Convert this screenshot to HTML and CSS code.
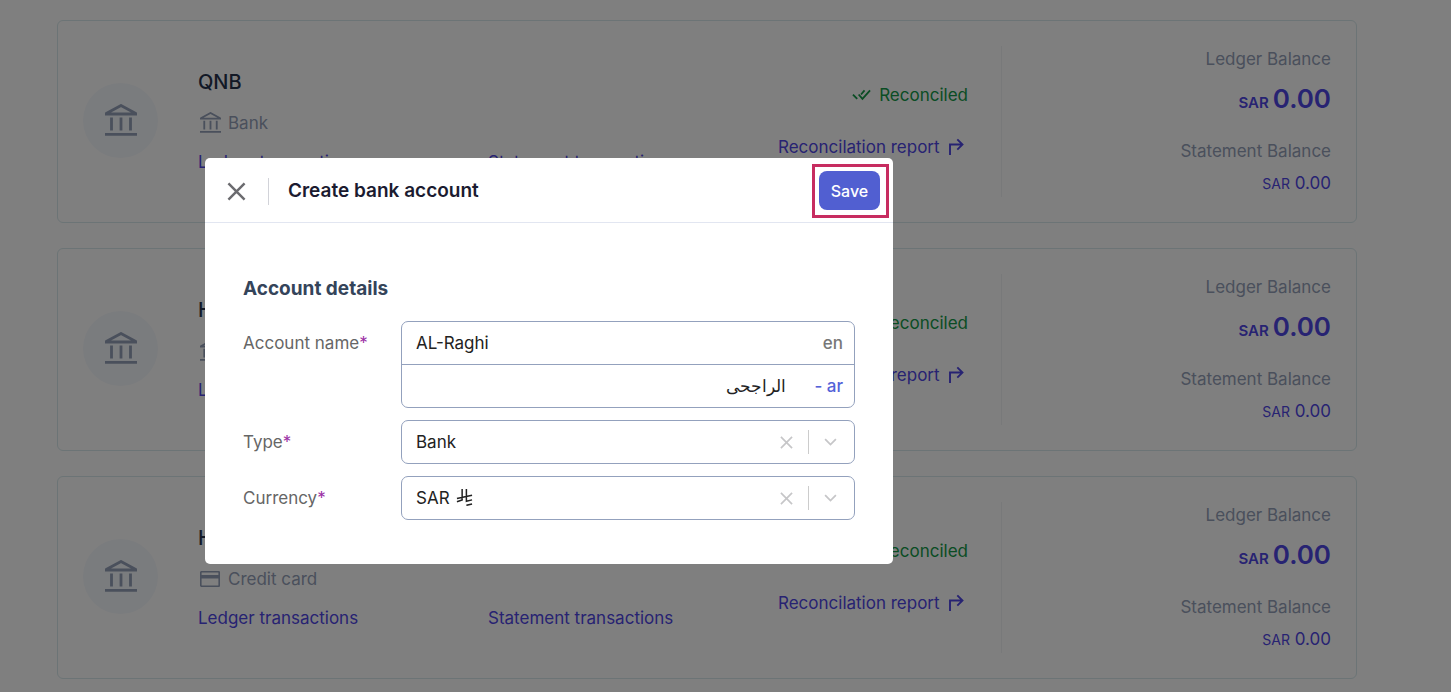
FILE: index.html
```
<!DOCTYPE html>
<html lang="en">
<head>
<meta charset="utf-8">
<title>Bank accounts</title>
<link rel="stylesheet" href="styles.css">
</head>
<body>
<svg class="sprite" aria-hidden="true">
  <symbol id="bank" viewBox="0 0 32 32"><path fill="none" stroke="currentColor" stroke-width="2.800" d="M0 30.400H32M0 10H32M6.500 13.500V26.500M16 13.500V26.500M25.500 13.500V26.500M1.200 9.500 16 1.500 30.800 9.500"/></symbol>
  <symbol id="credit" viewBox="0 0 20 16"><path fill="none" stroke="currentColor" stroke-width="1.700" d="M1.750.75h16.500a1 1 0 0 1 1 1v12.500a1 1 0 0 1-1 1H1.750a1 1 0 0 1-1-1V1.750a1 1 0 0 1 1-1Z"/><path fill="currentColor" d="M0 4h20v3.500H0z"/></symbol>
  <symbol id="checks" viewBox="0 0 20 12"><path fill="none" stroke="currentColor" stroke-width="1.900" d="M1 5.500 5.500 10.200M7 5.500 11 10 19 1.200M9.500 5.500 13.200 1.200"/></symbol>
  <symbol id="turn" viewBox="0 0 16 18"><path fill="none" stroke="currentColor" stroke-width="1.900" d="M2 17V6.500H14.500M9.300 1.300 14.500 6.500 9.300 11.700"/></symbol>
  <symbol id="cross" viewBox="0 0 20 20"><path fill="none" stroke="currentColor" stroke-width="2.600" d="M1.500 1.500 18.500 18.500M18.500 1.500 1.500 18.500"/></symbol>
  <symbol id="cross-thin" viewBox="0 0 14 14"><path fill="none" stroke="currentColor" stroke-width="1.800" d="M1 1 13 13M13 1 1 13"/></symbol>
  <symbol id="chevron" viewBox="0 0 14 8"><path fill="none" stroke="currentColor" stroke-width="1.900" d="M1.200 1 7 6.800 12.800 1"/></symbol>
  <symbol id="riyal" viewBox="0 0 18 18"><path fill="none" stroke="currentColor" stroke-width="1.600" d="M6.500 0V11.500L1 13.500M11 0V13L17 11.500M1 10 17 6.600M11 17.300 17 16"/></symbol>
</svg>

<main class="accounts">
  <article class="card">
    <div class="avatar"><svg><use href="#bank"/></svg></div>
    <div class="info">
      <h2>QNB</h2>
      <p class="kind"><svg><use href="#bank"/></svg>Bank</p>
      <a href="#">Ledger transactions</a>
    </div>
    <div class="statement"><a href="#">Statement transactions</a></div>
    <div class="status">
      <p class="reconciled"><svg><use href="#checks"/></svg>Reconciled</p>
      <a class="report" href="#">Reconcilation report<svg><use href="#turn"/></svg></a>
    </div>
    <div class="balance">
      <p>Ledger Balance</p>
      <p class="ledger"><span>SAR</span> 0.00</p>
      <p>Statement Balance</p>
      <p class="stated"><span>SAR</span> 0.00</p>
    </div>
  </article>
  <article class="card">
    <div class="avatar"><svg><use href="#bank"/></svg></div>
    <div class="info">
      <h2>H</h2>
      <p class="kind"><svg><use href="#bank"/></svg>Bank</p>
      <a href="#">Ledger transactions</a>
    </div>
    <div class="statement"><a href="#">Statement transactions</a></div>
    <div class="status">
      <p class="reconciled"><svg><use href="#checks"/></svg>Reconciled</p>
      <a class="report" href="#">Reconcilation report<svg><use href="#turn"/></svg></a>
    </div>
    <div class="balance">
      <p>Ledger Balance</p>
      <p class="ledger"><span>SAR</span> 0.00</p>
      <p>Statement Balance</p>
      <p class="stated"><span>SAR</span> 0.00</p>
    </div>
  </article>
  <article class="card">
    <div class="avatar"><svg><use href="#bank"/></svg></div>
    <div class="info">
      <h2>H</h2>
      <p class="kind"><svg class="credit"><use href="#credit"/></svg>Credit card</p>
      <a href="#">Ledger transactions</a>
    </div>
    <div class="statement"><a href="#">Statement transactions</a></div>
    <div class="status">
      <p class="reconciled"><svg><use href="#checks"/></svg>Reconciled</p>
      <a class="report" href="#">Reconcilation report<svg><use href="#turn"/></svg></a>
    </div>
    <div class="balance">
      <p>Ledger Balance</p>
      <p class="ledger"><span>SAR</span> 0.00</p>
      <p>Statement Balance</p>
      <p class="stated"><span>SAR</span> 0.00</p>
    </div>
  </article>
</main>

<div class="backdrop"></div>
<form class="modal" role="dialog" aria-labelledby="modal-title">
  <header class="modal-head">
    <button class="close" type="button" aria-label="Close"><svg><use href="#cross"/></svg></button>
    <h1 id="modal-title">Create bank account</h1>
    <div class="highlight"><button class="save" type="button">Save</button></div>
  </header>
  <div class="modal-body">
    <h2>Account details</h2>
    <div class="row">
      <label for="name-en">Account name<b>*</b></label>
      <div class="names">
        <div class="name"><input id="name-en" type="text" value="AL-Raghi"><span>en</span></div>
        <div class="name arabic"><input type="text" dir="rtl" lang="ar" aria-label="Account name in Arabic" value="الراجحى"><span>- ar</span></div>
      </div>
    </div>
    <div class="row">
      <label for="type">Type<b>*</b></label>
      <div class="picker">
        <select id="type"><option>Bank</option></select>
        <div class="tools"><button type="button" aria-label="Clear type"><svg><use href="#cross-thin"/></svg></button><svg class="chevron"><use href="#chevron"/></svg></div>
      </div>
    </div>
    <div class="row">
      <label for="currency">Currency<b>*</b></label>
      <div class="picker">
        <select id="currency"><option>SAR</option></select>
        <svg class="riyal"><use href="#riyal"/></svg>
        <div class="tools"><button type="button" aria-label="Clear currency"><svg><use href="#cross-thin"/></svg></button><svg class="chevron"><use href="#chevron"/></svg></div>
      </div>
    </div>
  </div>
</form>
</body>
</html>
```
FILE: styles.css
```
* { box-sizing: border-box; }
body {
  margin: 0;
  background: #fff;
  font: 400 17px/26px Inter, "Noto Sans", sans-serif;
  color: #222;
  overflow: hidden;
}
h1, h2, p { margin: 0; }
svg { display: block; flex: none; overflow: visible; }
.sprite { position: absolute; width: 0; height: 0; }
button { padding: 0; border: 0; background: none; font: inherit; }
a { color: #4f46e5; text-decoration: none; }

.accounts {
  display: flex;
  flex-direction: column;
  gap: 25px;
  padding: 20px 94px 12px 57px;
}
.card {
  display: grid;
  grid-template-columns: 115px 1fr 1fr 190px 363px;
  align-items: center;
  padding: 25px;
  border: 1px solid #d8e8ec;
  border-radius: 6px;
}
.avatar {
  display: grid;
  place-items: center;
  width: 75px;
  height: 75px;
  margin-bottom: 2px;
  border-radius: 50%;
  background: #f5f8fc;
  color: #94a0b8;
}
.avatar svg { width: 32px; height: 32px; margin-bottom: 2px; }
.info, .statement { line-height: 40px; white-space: nowrap; }
.info h2 { font-size: 20px; font-weight: 500; line-height: 41px; color: #27324c; }
.info a, .statement a { display: block; }
.info a { line-height: 39px; }
.statement { align-self: end; padding-bottom: 15px; }
.kind { display: flex; align-items: center; gap: 7px; padding-left: 2px; color: #94a0b8; }
.kind svg { width: 21px; height: 21px; }
.kind .credit { width: 20px; height: 16px; margin-right: 1px; }
.status { padding-bottom: 2px; line-height: 52px; white-space: nowrap; }
.reconciled { display: flex; align-items: center; justify-content: flex-end; gap: 8px; color: #149a48; }
.reconciled svg { width: 19px; height: 12px; }
.report { display: flex; align-items: center; gap: 8px; }
.report svg { width: 16px; height: 18px; }
.balance { margin-left: 33px; border-left: 1px solid #f1f2f4; height: 151px; text-align: right; color: #94a0b8; }
.balance .ledger { display: flex; justify-content: flex-end; align-items: baseline; gap: 4px; margin-bottom: 12px; font-size: 26px; font-weight: 600; line-height: 54px; color: #4f46e5; }
.ledger span { font-size: 15px; line-height: 1; }
.balance .stated { margin-top: 6px; color: #4f46e5; }
.stated span { font-size: 14px; line-height: 1; }

.backdrop { position: fixed; inset: 0; background: rgba(0, 0, 0, .5); }
.modal {
  position: fixed;
  top: 158px;
  left: 205px;
  width: 688px;
  border-radius: 5px;
  background: #fff;
}
.modal-head {
  display: flex;
  align-items: center;
  height: 65px;
  padding: 2px 4px 0 22px;
  border-bottom: 1px solid #e2e6f1;
}
.close { padding-right: 22px; border-right: 1px solid #d2d3d9; line-height: 0; height: 27px; color: #6b6b6f; }
.close svg { width: 19px; height: 19px; }
.modal h1 { flex: 1; padding-left: 19px; font-size: 19px; font-weight: 600; color: #1b1b30; }
.highlight { padding: 4px 6px 5px 4px; border: 3px solid #c72c60; }
.save { display: block; width: 61px; height: 39px; border-radius: 8px; background: #515fd1; color: #fff; font-size: 16px; font-weight: 500; }
.modal-body { display: grid; gap: 12px; padding: 53px 38px 44px; }
.modal-body h2 { margin-bottom: 7px; font-size: 19px; font-weight: 700; color: #34445a; }
.row { display: grid; grid-template-columns: 158px 1fr; }
.row label { line-height: 44px; color: #666; }
.row b { font-weight: 400; color: #9b30a5; }
.names { border: 1px solid #93a1bd; border-radius: 7px; }
.name { display: flex; align-items: center; height: 42px; padding: 0 11px 0 14px; }
.name + .name { height: 43px; border-top: 1px solid #93a1bd; }
.name input { flex: 1; min-width: 0; padding: 0; border: 0; background: none; font: inherit; color: #222; outline: 0; }
.name span { font-weight: 500; color: #777; }
.arabic input { margin-right: 28px; }
.name.arabic span { color: #5462d8; }
.picker { position: relative; }
.picker select { display: block; width: 100%; height: 44px; padding: 0 90px 0 14px; border: 1px solid #93a1bd; border-radius: 7px; background: #fff; font: inherit; color: #222; appearance: none; }
.tools { position: absolute; top: 0; right: 18px; height: 44px; display: flex; align-items: center; color: #c6c6c8; }
.tools button { display: flex; align-items: center; height: 24px; padding-right: 15px; border-right: 1px solid #ccc; color: inherit; }
.tools button svg { width: 13px; height: 13px; }
.tools .chevron { width: 13px; height: 8px; margin-left: 15px; }
.riyal { position: absolute; top: 13px; left: 55px; width: 17px; height: 17px; color: #222; }
```
